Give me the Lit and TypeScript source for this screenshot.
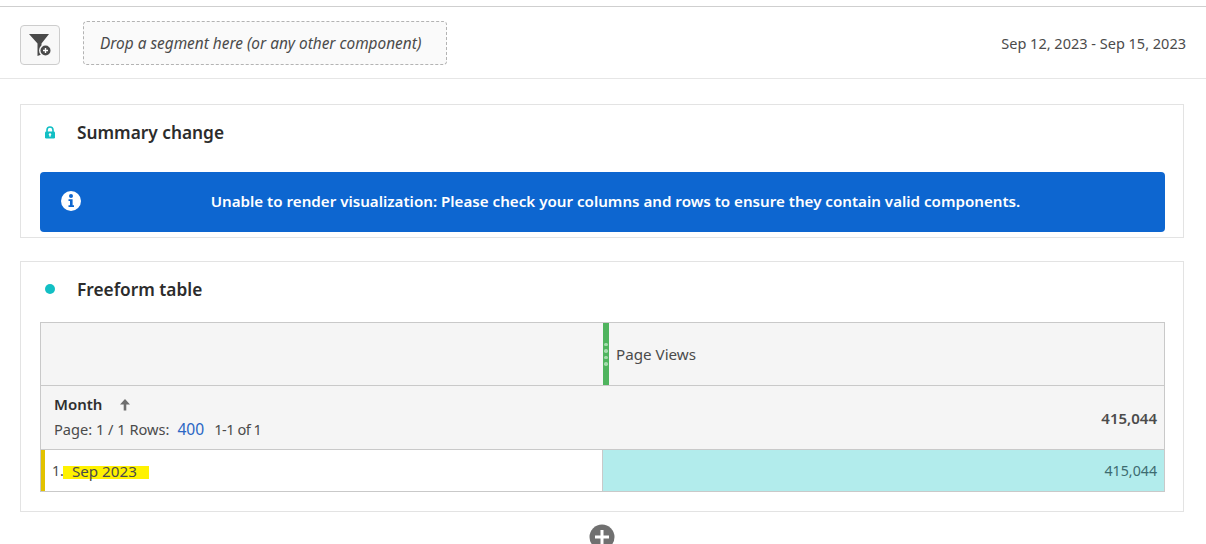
import { LitElement, html, css } from 'lit';
import { customElement } from 'lit/decorators.js';

@customElement('app-root')
export class AppRoot extends LitElement {
  static styles = css`
    :host {
      display: block;
      width: 1206px;
      height: 544px;
      overflow: hidden;
      background: #fff;
      font-family: "Noto Sans", Lato, sans-serif;
      color: #2c2c2c;
    }
    .topline {
      height: 6px;
      border-bottom: 1px solid #cfcfcf;
    }
    .toolbar {
      height: 72px;
      box-sizing: border-box;
      border-bottom: 1px solid #e6e6e6;
      display: flex;
      align-items: flex-start;
      padding: 14px 20px 0;
    }
    .filter-btn {
      width: 40px;
      height: 40px;
      margin-top: 4px;
      box-sizing: border-box;
      border: 1px solid #cdcdcd;
      border-radius: 4px;
      background: #f8f8f8;
      display: flex;
      align-items: center;
      justify-content: center;
    }
    .drop {
      margin-left: 23px;
      width: 364px;
      height: 44px;
      box-sizing: border-box;
      border: 1px dashed #b3b3b3;
      border-radius: 4px;
      background: #fafafa;
      display: flex;
      align-items: center;
      padding: 1px 0 0 16px;
      font-style: italic;
      font-size: 15.4px;
      color: #4b4b4b;
    }
    .dates {
      margin-left: auto;
      margin-top: 12px;
      font-size: 14.5px;
      color: #4b4b4b;
    }
    .panel {
      margin: 0 22px 0 20px;
      border: 1px solid #e3e3e3;
      box-sizing: border-box;
    }
    .panel.summary {
      margin-top: 25px;
      height: 134px;
    }
    .panel.table {
      margin-top: 23px;
      height: 251px;
    }
    .title {
      height: 54px;
      display: flex;
      align-items: center;
      font-size: 17.3px;
      font-weight: 600;
      color: #2c2c2c;
    }
    .title .mark {
      width: 56px;
      padding-left: 23px;
      box-sizing: border-box;
      display: flex;
      align-items: center;
    }
    .dot {
      width: 10px;
      height: 10px;
      margin-left: 1px;
      border-radius: 50%;
      background: #12bfc4;
    }
    .alert {
      margin: 13px 18px 0 19px;
      height: 60px;
      background: #0d66d0;
      border-radius: 4px;
      color: #fff;
      font-size: 15.15px;
      font-weight: 600;
      display: flex;
      align-items: center;
      padding: 0 0 3px 21px;
      box-sizing: border-box;
    }
    .alert .msg {
      flex: 1;
      text-align: center;
      padding-right: 15px;
    }
    .grid {
      margin: 6px 18px 0 19px;
      border: 1px solid #c9c9c9;
      box-sizing: border-box;
      height: 170px;
      display: grid;
      grid-template-columns: 562px 1fr;
      grid-template-rows: 63px 64px 1fr;
      font-size: 14.2px;
      color: #4b4b4b;
    }
    .head-left,
    .head-right {
      background: #f5f5f5;
      border-bottom: 1px solid #c9c9c9;
    }
    .head-right {
      display: flex;
      align-items: center;
      position: relative;
      padding-left: 13px;
      font-size: 15.2px;
    }
    .handle {
      position: absolute;
      left: 0;
      top: 0;
      bottom: 0;
      width: 6px;
      background: #4fb45e;
      display: flex;
      flex-direction: column;
      align-items: center;
      justify-content: center;
      gap: 3px;
    }
    .handle i {
      width: 3.5px;
      height: 3.5px;
      border-radius: 50%;
      background: #a6dcae;
    }
    .sub-left,
    .sub-right {
      background: #f5f5f5;
      border-bottom: 1px solid #c9c9c9;
    }
    .sub-left {
      padding: 8px 0 0 13px;
    }
    .month {
      display: flex;
      align-items: center;
      font-weight: 600;
      font-size: 15px;
      color: #2f2f2f;
      height: 20px;
    }
    .month svg {
      margin-left: 17px;
    }
    .paging {
      display: flex;
      align-items: baseline;
      margin-top: 4px;
      font-size: 14.6px;
      white-space: pre;
    }
    .paging a {
      color: #2a66c4;
      margin: 0 10px 0 8px;
      font-size: 15.6px;
    }
    .paging span {
      letter-spacing: -0.5px;
    }
    .sub-right {
      display: flex;
      align-items: center;
      justify-content: flex-end;
      padding-right: 7px;
      font-weight: 600;
      font-size: 15px;
    }
    .row-left {
      border-left: 4px solid #e2c200;
      padding-left: 7px;
      display: flex;
      align-items: center;
      border-right: 1px solid #c9c9c9;
      box-sizing: border-box;
    }
    .mark-yellow {
      background: #fff200;
      margin: 3px 0 0 -1px;
      padding: 0 12px 0 9px;
      height: 13px;
      line-height: 10px;
      font-size: 15.2px;
    }
    .row-right {
      background: #b2ecec;
      color: #3d6b70;
      display: flex;
      align-items: center;
      justify-content: flex-end;
      padding-right: 7px;
    }
    .add {
      display: flex;
      justify-content: center;
      margin: 12px 0 0 -3px;
    }
  `;

  render() {
    return html`
      <div class="topline"></div>
      <div class="toolbar">
        <div class="filter-btn">
          <svg width="24" height="24" viewBox="0 0 24 24">
            <path d="M1 1H21L13.5 10.5V21.5L9.5 23V10.5Z" fill="#4a4a4a" />
            <circle cx="17.5" cy="17.5" r="6.5" fill="#f8f8f8" />
            <circle cx="17.5" cy="17.5" r="5" fill="#4a4a4a" />
            <path d="M17.5 15V20M15 17.5H20" stroke="#fff" stroke-width="1.4" />
          </svg>
        </div>
        <div class="drop">Drop a segment here (or any other component)</div>
        <div class="dates">Sep 12, 2023 - Sep 15, 2023</div>
      </div>
      <div class="panel summary">
        <div class="title">
          <span class="mark">
            <svg width="12" height="13" viewBox="0 0 12 13">
              <path d="M3 6V4a3 3 0 0 1 6 0V6" fill="none" stroke="#12bfc4" stroke-width="1.6" />
              <rect x="1" y="5.5" width="10" height="7" rx="1.2" fill="#12bfc4" />
              <circle cx="6" cy="8.5" r="1.2" fill="#fff" />
              <rect x="5.5" y="8.5" width="1" height="2.4" fill="#fff" />
            </svg>
          </span>
          Summary change
        </div>
        <div class="alert">
          <svg width="20" height="20" viewBox="0 0 20 20">
            <circle cx="10" cy="10" r="10" fill="#fff" />
            <circle cx="10" cy="5" r="2" fill="#0d66d0" />
            <path d="M7.5 8.2H11.6V14.2H13V16H7.5V14.2H9V10H7.5Z" fill="#0d66d0" />
          </svg>
          <span class="msg">Unable to render visualization: Please check your columns and rows to ensure they contain valid components.</span>
        </div>
      </div>
      <div class="panel table">
        <div class="title">
          <span class="mark"><span class="dot"></span></span>
          Freeform table
        </div>
        <div class="grid">
          <div class="head-left"></div>
          <div class="head-right">
            <div class="handle"><i></i><i></i><i></i><i></i></div>
            Page Views
          </div>
          <div class="sub-left">
            <div class="month">
              Month
              <svg width="12" height="13" viewBox="0 0 12 13">
                <path d="M6 1L11 6.5H7.3V12.5H4.7V6.5H1Z" fill="#6e6e6e" />
              </svg>
            </div>
            <div class="paging">Page: 1 / 1 Rows:<a>400</a><span>1-1 of 1</span></div>
          </div>
          <div class="sub-right">415,044</div>
          <div class="row-left">1.<span class="mark-yellow">Sep 2023</span></div>
          <div class="row-right">415,044</div>
        </div>
      </div>
      <div class="add">
        <svg width="26" height="26" viewBox="0 0 26 26">
          <circle cx="13" cy="13" r="12.5" fill="#707070" />
          <path d="M13 6V20M6 13H20" stroke="#fff" stroke-width="3" />
        </svg>
      </div>
    `;
  }
}
